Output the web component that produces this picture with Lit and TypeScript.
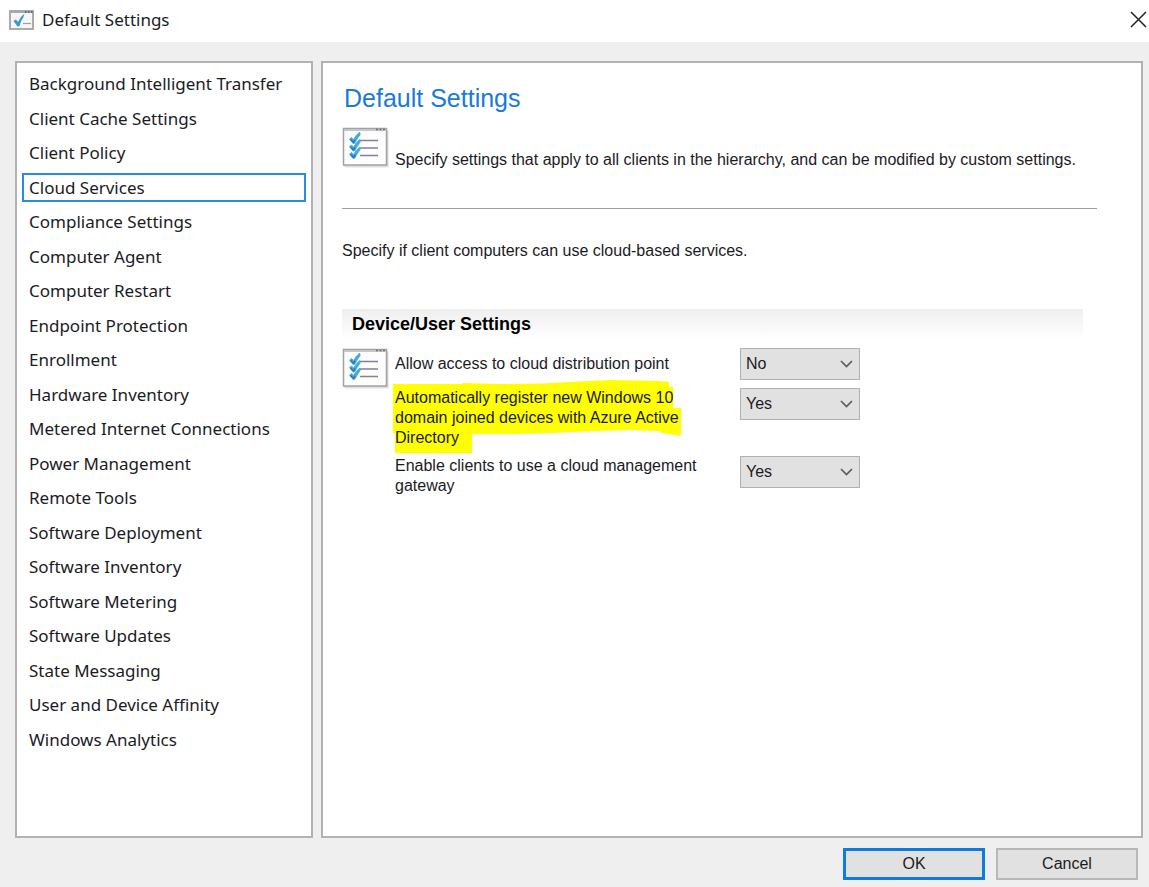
import { LitElement, html, css, svg } from "lit";
import { customElement, state } from "lit/decorators.js";

interface Setting {
  id: string;
  label: string;
  value: string;
  marked?: boolean;
}

@customElement("checklist-icon")
class ChecklistIcon extends LitElement {
  static styles = css`
    :host {
      display: block;
      width: 47px;
      height: 41px;
    }
    svg {
      display: block;
    }
  `;

  render() {
    return html`
      <svg width="47" height="41" viewBox="0 0 47 41" fill="none" aria-hidden="true">
        <path d="M3 40H46.500V4" stroke="#ececec" stroke-width="1.500" />
        <path d="M2 38.800H45.300V3" stroke="#d2d2d2" stroke-width="1.200" />
        <rect x="1.500" y="1.500" width="43" height="36.500" fill="#fdfdfd" stroke="#a2a2a4" stroke-width="1.500" />
        <path d="M2 3H44" stroke="#c6c7ca" stroke-width="2" />
        <path d="M34 2.500h2M37.500 2.500h2M41 2.500h2" stroke="#6f7074" stroke-width="1.500" />
        <path d="M18 13.500H36M18 21H36M18 28.500H36" stroke="#83819a" stroke-width="1.500" />
        ${[0, 7.5, 15].map(
          (y) => svg`
            <g transform=${`translate(0 ${y})`}>
              <path d="M7.500 12L9.600 10.500L11.600 12.600Q13.500 8.500 17.600 5L18.200 7.600Q15.500 11 12.800 16.200L10.900 16.400Z" fill="#45aadb" stroke="#45aadb" stroke-width=".8" stroke-linejoin="round" />
              <path d="M8.500 12.500L11.700 15.400L13 12.800" stroke="#2878b2" stroke-width="1.400" />
            </g>
          `
        )}
      </svg>
    `;
  }
}

@customElement("app-root")
class AppRoot extends LitElement {
  static styles = css`
    :host {
      display: flex;
      flex-direction: column;
      min-height: 100vh;
      box-sizing: border-box;
      background: #efefef;
      color: #1b1b1f;
      font: 16px/20px "Liberation Sans", Arial, sans-serif;
    }
    .titlebar {
      display: flex;
      align-items: center;
      gap: 8px;
      height: 42px;
      box-sizing: border-box;
      padding: 0 2px 2px 9px;
      background: #fff;
    }
    .window-title {
      flex: 1;
      margin: 0;
      font: 17px/24px "Noto Sans", "Open Sans", sans-serif;
    }
    .close {
      display: grid;
      align-self: flex-start;
      place-items: center;
      width: 17px;
      height: 38px;
      padding: 0;
      border: 0;
      background: none;
    }
    .panels {
      flex: 1;
      display: flex;
      gap: 8px;
      padding: 19px 6px 0 15px;
    }
    .sidebar {
      display: flex;
      box-sizing: border-box;
      width: 298px;
      padding: 6px 5px 82px;
      border: 2px solid #b2b2b2;
      background: #fff;
    }
    .categories {
      flex: 1;
      display: flex;
      flex-direction: column;
      justify-content: space-between;
      margin: 0;
      padding: 0;
      list-style: none;
    }
    .category {
      display: block;
      width: 100%;
      box-sizing: border-box;
      padding: 0 5px;
      border: 2px solid transparent;
      background: none;
      color: inherit;
      font: 17px/25px "Noto Sans", "Open Sans", sans-serif;
      text-align: left;
    }
    .category.selected {
      border-color: #2b8ae2;
    }
    .content {
      flex: 1;
      box-sizing: border-box;
      padding: 20px 44px 20px 19px;
      border: 2px solid #b2b2b2;
      background: #fff;
    }
    .heading {
      margin: 0 0 14px 2px;
      color: #1a7ad9;
      font-size: 25px;
      font-weight: 400;
      line-height: 30px;
    }
    .intro {
      display: flex;
      align-items: flex-end;
      gap: 6px;
      padding-bottom: 38px;
      border-bottom: 1px solid #a0a0a0;
    }
    .intro checklist-icon {
      margin-bottom: 2px;
    }
    p {
      margin: 0;
    }
    .purpose {
      margin: 32px 0 48px;
    }
    .section {
      margin: 0 14px 8px 0;
      padding: 5px 10px 6px;
      background: linear-gradient(#efefef, #fff);
      color: #000;
      font-size: 18px;
      line-height: 20px;
    }
    .settings {
      display: grid;
      grid-template-columns: 47px 339px 120px;
      column-gap: 6px;
      row-gap: 8px;
      align-items: center;
    }
    .settings checklist-icon {
      grid-row: 1;
      height: 32px;
    }
    .label {
      grid-column: 2;
      position: relative;
      z-index: 0;
      max-width: 305px;
    }
    .marker {
      position: absolute;
      left: -2px;
      top: -8px;
      z-index: -1;
    }
    .picker {
      grid-column: 3;
      display: grid;
      width: 120px;
      align-self: start;
      justify-self: end;
      align-items: center;
    }
    .select {
      grid-area: 1 / 1;
      appearance: none;
      width: 120px;
      height: 32px;
      margin: 0;
      padding: 0 28px 0 5px;
      border: 1px solid #b0b0b0;
      border-radius: 0;
      background: #e1e1e1;
      color: inherit;
      font: inherit;
    }
    .chevron {
      grid-area: 1 / 1;
      justify-self: end;
      margin-right: 6px;
      pointer-events: none;
    }
    .footer {
      display: flex;
      justify-content: flex-end;
      gap: 11px;
      padding: 10px 11px 7px;
    }
    .button {
      width: 142px;
      height: 32px;
      padding: 0;
      border: 2px solid #b8b8b8;
      background: #e1e1e1;
      color: inherit;
      font: inherit;
    }
    .button.primary {
      border: 3px solid #0f7bdc;
    }
  `;

  @state() private selected = "Cloud Services";

  private categories = [
    "Background Intelligent Transfer",
    "Client Cache Settings",
    "Client Policy",
    "Cloud Services",
    "Compliance Settings",
    "Computer Agent",
    "Computer Restart",
    "Endpoint Protection",
    "Enrollment",
    "Hardware Inventory",
    "Metered Internet Connections",
    "Power Management",
    "Remote Tools",
    "Software Deployment",
    "Software Inventory",
    "Software Metering",
    "Software Updates",
    "State Messaging",
    "User and Device Affinity",
    "Windows Analytics",
  ];

  private settings: Setting[] = [
    { id: "distribution", label: "Allow access to cloud distribution point", value: "No" },
    {
      id: "register",
      label: "Automatically register new Windows 10 domain joined devices with Azure Active Directory",
      value: "Yes",
      marked: true,
    },
    { id: "gateway", label: "Enable clients to use a cloud management gateway", value: "Yes" },
  ];

  private renderSetting(s: Setting) {
    return html`
      <label class="label" for=${s.id}>
        ${s.marked
          ? html`<svg class="marker" width="290" height="74" viewBox="0 0 290 74" aria-hidden="true">
              <path
                d="M0 4H70V3L106 4L150 3.500L177 2L217 0L267 1L276 2V7H280V28H288V56L269 53L266 51L237 50L202 51L160 53L124 54H79V73H2V53H0Z"
                fill="#ffff00"
              />
            </svg>`
          : null}
        ${s.label}
      </label>
      <span class="picker">
        <select class="select" id=${s.id}>
          <option ?selected=${s.value === "Yes"}>Yes</option>
          <option ?selected=${s.value === "No"}>No</option>
        </select>
        <svg class="chevron" width="15" height="10" viewBox="0 0 15 10" fill="none" aria-hidden="true">
          <path d="M2 2L7.500 7.500L13 2" stroke="#5c5c5c" stroke-width="1.700" />
        </svg>
      </span>
    `;
  }

  render() {
    return html`
      <header class="titlebar">
        <svg width="25" height="20" viewBox="0 0 25 20" fill="none" aria-hidden="true">
          <rect x="1" y="1" width="23" height="18" fill="#f7f7f7" stroke="#a2a2a4" stroke-width="1.800" />
          <path d="M1 2H24" stroke="#a8a9ac" stroke-width="2" />
          <path d="M16 2h1.500M19 2h1.500M22 2h1.500" stroke="#68696c" stroke-width="1.800" />
          <path d="M14 13.500H22" stroke="#a0a0a4" stroke-width="1.200" />
          <path d="M4.500 11L7 9.500L9 12Q11 7 15.500 3.500L14.500 7Q11.500 11 10.500 16L8.500 16.500Z" fill="#3599d0" />
        </svg>
        <h1 class="window-title">Default Settings</h1>
        <button class="close" aria-label="Close">
          <svg width="17" height="17" viewBox="0 0 17 17" fill="none" aria-hidden="true">
            <path d="M1 1L16 16M16 1L1 16" stroke="#222" stroke-width="1.500" />
          </svg>
        </button>
      </header>
      <div class="panels">
        <nav class="sidebar" aria-label="Settings categories">
          <ul class="categories">
            ${this.categories.map(
              (c) => html`<li>
                <button
                  class="category ${c === this.selected ? "selected" : ""}"
                  @click=${() => (this.selected = c)}
                >${c}</button>
              </li>`
            )}
          </ul>
        </nav>
        <main class="content">
          <h2 class="heading">Default Settings</h2>
          <div class="intro">
            <checklist-icon></checklist-icon>
            <p>Specify settings that apply to all clients in the hierarchy, and can be modified by custom settings.</p>
          </div>
          <p class="purpose">Specify if client computers can use cloud-based services.</p>
          <h3 class="section">Device/User Settings</h3>
          <div class="settings">
            <checklist-icon></checklist-icon>
            ${this.settings.map((s) => this.renderSetting(s))}
          </div>
        </main>
      </div>
      <footer class="footer">
        <button class="button primary">OK</button>
        <button class="button">Cancel</button>
      </footer>
    `;
  }
}
